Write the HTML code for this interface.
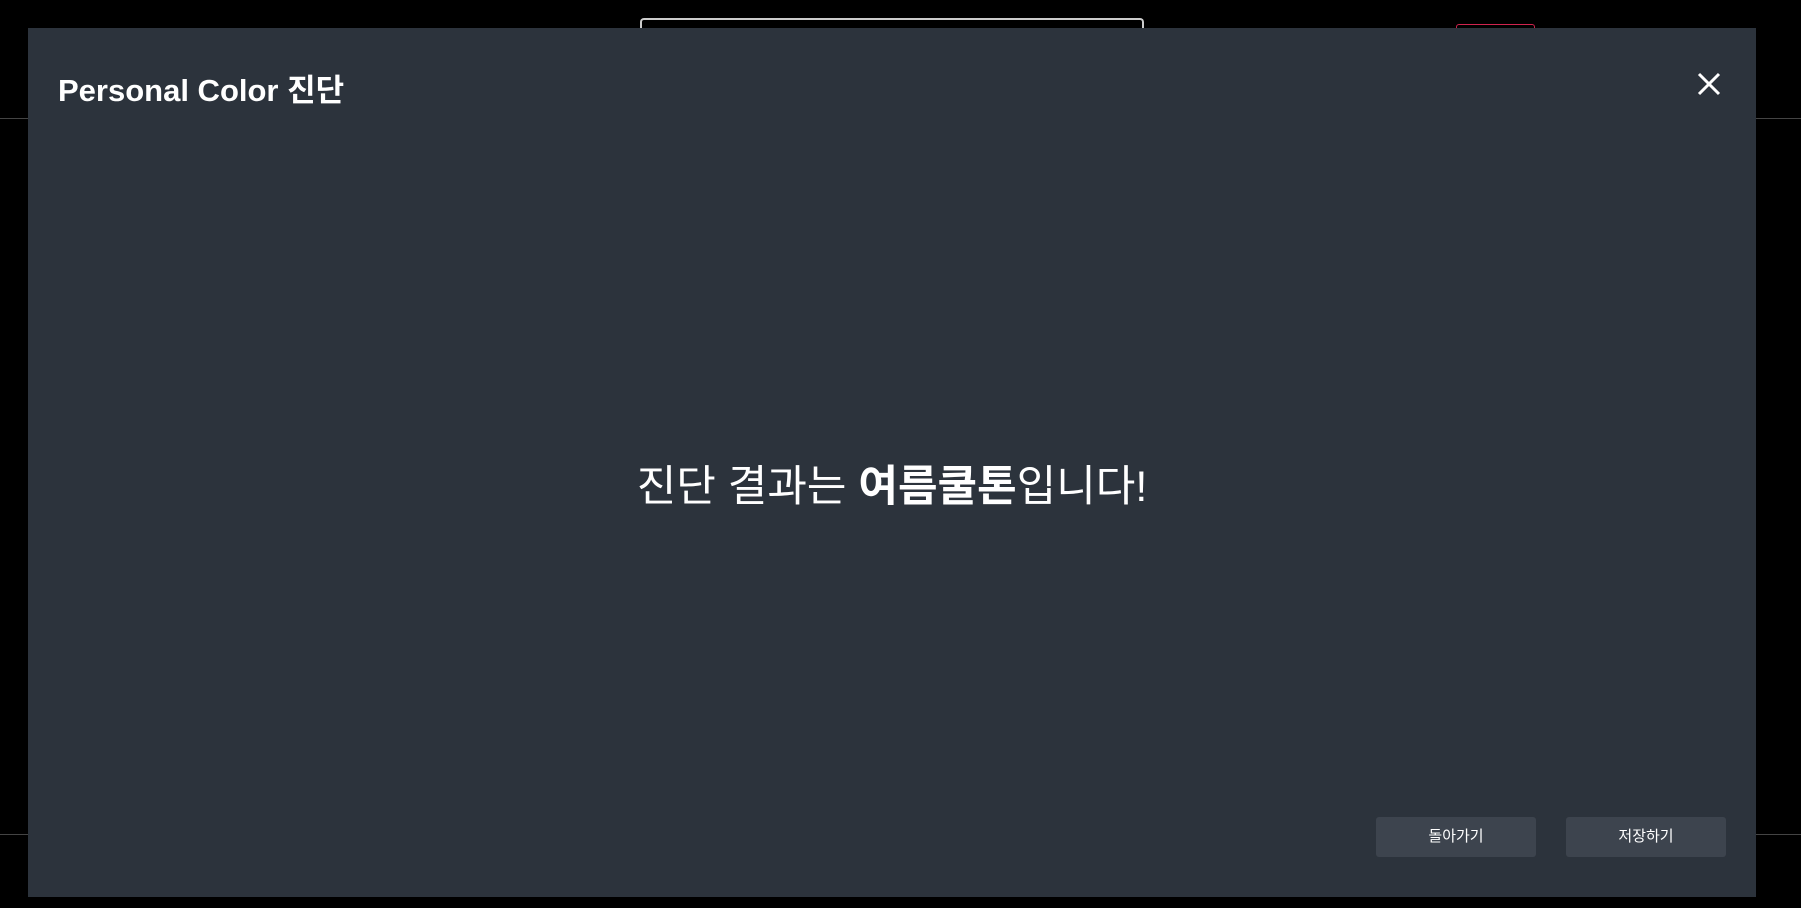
<!DOCTYPE html>
<html><head><meta charset="utf-8"><style>
html,body{margin:0;padding:0;width:1801px;height:908px;background:#000;overflow:hidden;font-family:"Liberation Sans","Noto Sans CJK KR",sans-serif;}
.line{position:absolute;left:0;width:1801px;height:1px;background:#444;}
.modal{position:absolute;left:28px;top:28px;width:1728px;height:869px;background:#2c333c;}
.title{position:absolute;left:30px;top:41px;font-size:31px;font-weight:bold;color:#fff;line-height:44px;}
.close{position:absolute;left:1669px;top:44px;}
.msg{position:absolute;left:0;width:1728px;top:431px;text-align:center;color:#fff;font-size:43px;line-height:56px;}
.btn{position:absolute;top:789px;width:160px;height:40px;background:#3d444e;border-radius:3px;color:#fff;font-size:15px;line-height:40px;text-align:center;}
</style></head><body>
<div class="line" style="top:118px"></div>
<div class="line" style="top:834px"></div>
<div style="position:absolute;left:640px;top:18px;width:500px;height:20px;border:2px solid #ccc;border-bottom:none;border-radius:4px 4px 0 0;"></div>
<div style="position:absolute;left:1456px;top:24px;width:77px;height:10px;border:1px solid #d0244f;border-bottom:none;border-radius:3px 3px 0 0;"></div>
<div class="modal">
<div class="title">Personal Color 진단</div>
<svg class="close" width="24" height="24" viewBox="0 0 24 24"><path d="M2 2L22 22M22 2L2 22" stroke="#fff" stroke-width="3"/></svg>
<div class="msg">진단 결과는 <b>여름쿨톤</b>입니다!</div>
<div class="btn" style="left:1348px">돌아가기</div>
<div class="btn" style="left:1538px">저장하기</div>
</div>
</body></html>
